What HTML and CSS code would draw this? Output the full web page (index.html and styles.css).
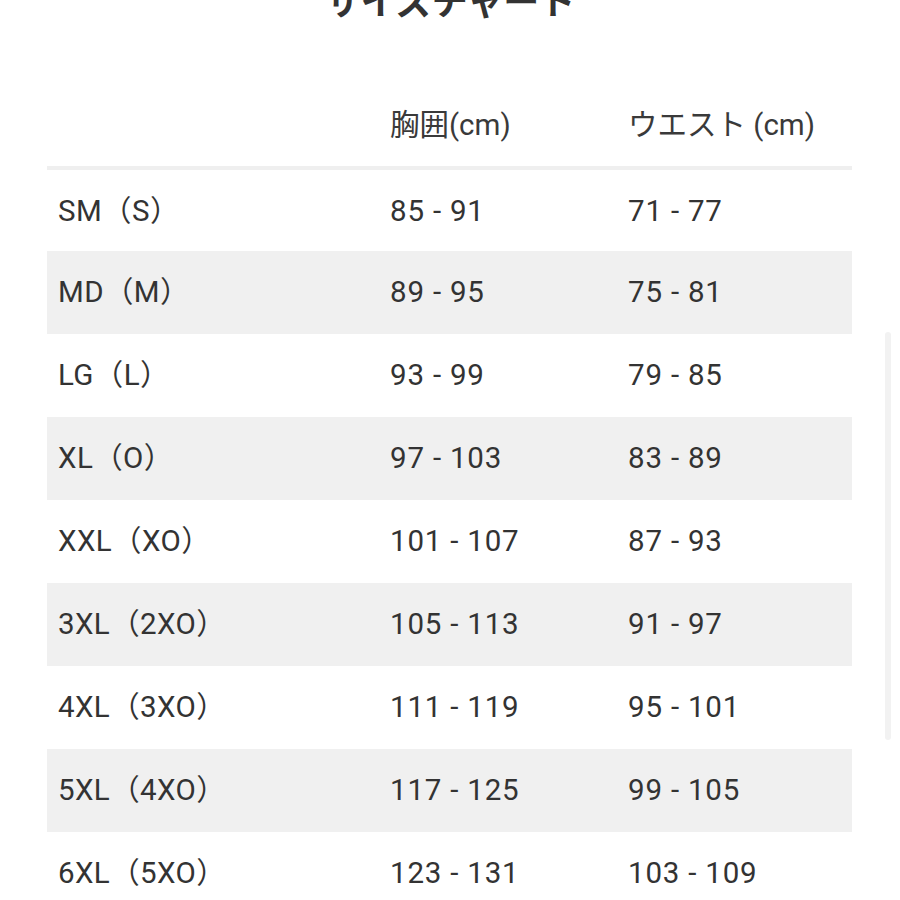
FILE: index.html
```html
<!DOCTYPE html>
<html lang="ja">
<head>
<meta charset="utf-8">
<link rel="stylesheet" href="styles.css">
</head>
<body>
<div class="page">
  <h2 class="title">サイズチャート</h2>
  <table class="chart">
    <colgroup><col class="c1"><col class="c2"><col class="c3"></colgroup>
    <thead>
      <tr><th></th><th>胸囲(cm)</th><th>ウエスト (cm)</th></tr>
    </thead>
    <tbody>
      <tr><td>SM（S）</td><td class="num">85 - 91</td><td class="num">71 - 77</td></tr>
      <tr class="alt"><td>MD（M）</td><td class="num">89 - 95</td><td class="num">75 - 81</td></tr>
      <tr><td>LG（L）</td><td class="num">93 - 99</td><td class="num">79 - 85</td></tr>
      <tr class="alt"><td>XL（O）</td><td class="num">97 - 103</td><td class="num">83 - 89</td></tr>
      <tr><td>XXL（XO）</td><td class="num">101 - 107</td><td class="num">87 - 93</td></tr>
      <tr class="alt"><td>3XL（2XO）</td><td class="num">105 - 113</td><td class="num">91 - 97</td></tr>
      <tr><td>4XL（3XO）</td><td class="num">111 - 119</td><td class="num">95 - 101</td></tr>
      <tr class="alt"><td>5XL（4XO）</td><td class="num">117 - 125</td><td class="num">99 - 105</td></tr>
      <tr class="last"><td>6XL（5XO）</td><td class="num">123 - 131</td><td class="num">103 - 109</td></tr>
    </tbody>
  </table>
  <div class="scrollbar"></div>
</div>
</body>
</html>
```
FILE: styles.css
```css
html, body {
  margin: 0;
  padding: 0;
  background: #fff;
  overflow: hidden;
}
body {
  font-family: Roboto, "Noto Sans CJK JP", sans-serif;
  color: #333;
}
.page {
  position: relative;
  width: 900px;
  height: 900px;
  overflow: hidden;
}
.title {
  margin: -21px 0 0;
  font-family: "Noto Sans CJK JP", sans-serif;
  font-size: 36px;
  line-height: 40px;
  font-weight: 700;
  text-align: center;
  color: #333;
}
.chart {
  margin: 69px 0 0 47px;
  width: 805px;
  border-collapse: collapse;
  table-layout: fixed;
  font-size: 29.5px;
}
.c1 { width: 332px; }
.c2 { width: 238px; }
.c3 { width: 235px; }
.chart th {
  font-weight: 400;
  text-align: left;
  padding: 0 0 10px 11px;
  height: 68px;
  vertical-align: middle;
  border-bottom: 4px solid #efefef;
  color: #3a3a3a;
}
.chart tbody tr {
  height: 83px;
}
.chart tbody tr.last {
  height: 65px;
}
.chart td {
  padding: 23px 0 0 11px;
  line-height: 36px;
  vertical-align: baseline;
  white-space: nowrap;
  letter-spacing: 0.4px;
}
.chart td.num {
  letter-spacing: 0.8px;
}
.chart tr.alt td {
  background: #f0f0f0;
}
.scrollbar {
  position: absolute;
  left: 885px;
  top: 332px;
  width: 6px;
  height: 408px;
  border-radius: 3px;
  background: #f2f2f2;
}
```
